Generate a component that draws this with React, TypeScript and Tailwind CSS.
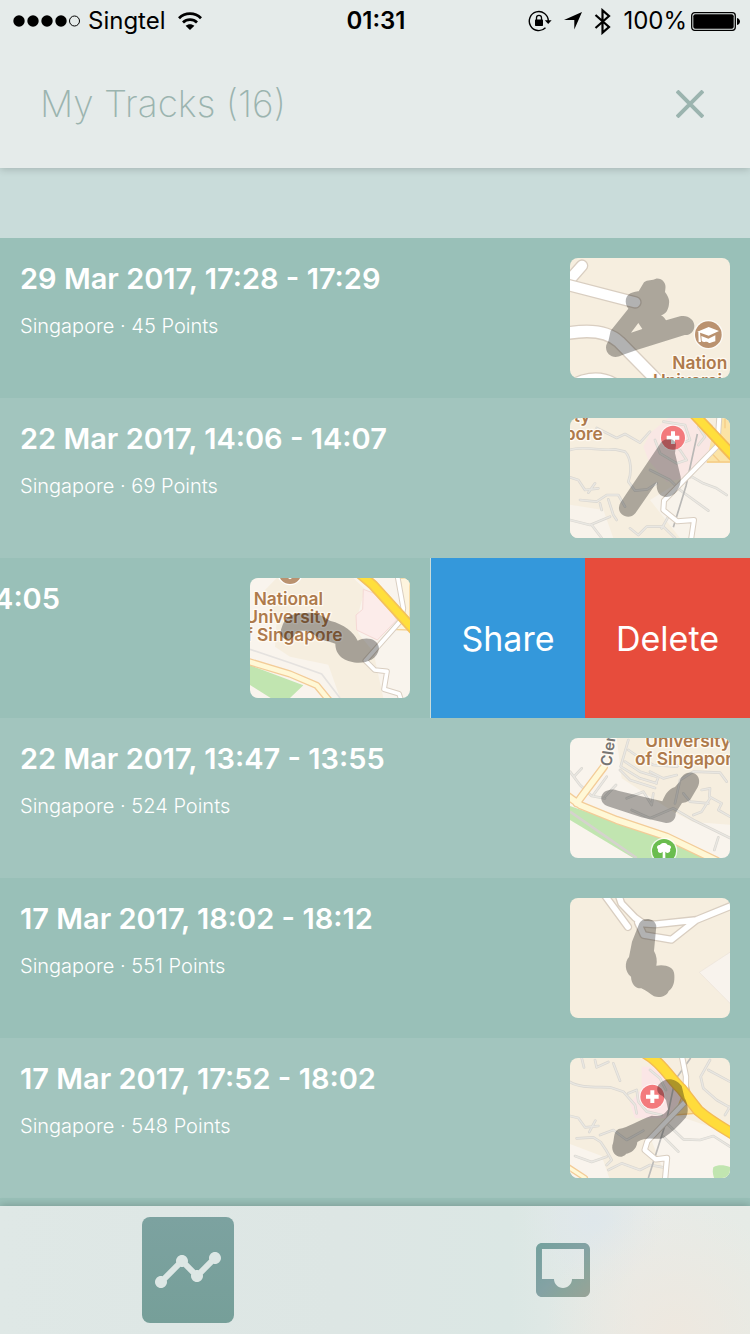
import type { ReactNode } from "react";

type RoadProps = { d: string; width: number; casing?: string; fill?: string; edge?: number };

function Road({ d, width, casing = "#d9cec1", fill = "#ffffff", edge = 4 }: RoadProps) {
  return (
    <g fill="none" strokeLinecap="round" strokeLinejoin="round">
      <path d={d} stroke={casing} strokeWidth={width + edge * 2} />
      <path d={d} stroke={fill} strokeWidth={width} />
    </g>
  );
}

function Lane({ d, width = 4 }: { d: string; width?: number }) {
  return (
    <g fill="none" strokeLinecap="round" strokeLinejoin="round">
      <path d={d} stroke="#dad7d1" strokeWidth={width + 4} />
      <path d={d} stroke="#e9e7e2" strokeWidth={width} />
    </g>
  );
}

type LabelProps = { x: number; y: number; children: string; size?: number; color?: string; transform?: string };

function Label({ x, y, children, size = 52, color = "#ae7a4c", transform }: LabelProps) {
  return (
    <text
      x={x}
      y={y}
      transform={transform}
      fontSize={size}
      fontWeight={600}
      fill={color}
      stroke="#fffaf2"
      strokeWidth={8}
      strokeLinejoin="round"
      paintOrder="stroke"
    >
      {children}
    </text>
  );
}

function Hospital({ x, y }: { x: number; y: number }) {
  return (
    <g>
      <circle cx={x} cy={y} r={39} fill="#fff" fillOpacity={0.7} />
      <circle cx={x} cy={y} r={36} fill="#f37a7d" />
      <path d={`M${x - 19} ${y}H${x + 19}M${x} ${y - 19}V${y + 19}`} stroke="#fff" strokeWidth={12} />
    </g>
  );
}

function MapThumb({ label, base = "#f6eedf", children }: { label: string; base?: string; children: ReactNode }) {
  return (
    <svg
      role="img"
      aria-label={label}
      viewBox="30 24 480 360"
      className="h-[120px] w-40 shrink-0 rounded-lg font-['Inter','Liberation_Sans',sans-serif]"
    >
      <rect x={30} y={24} width={480} height={360} fill={base} />
      {children}
    </svg>
  );
}

function CampusMap() {
  return (
    <MapThumb label="Map">
      <Road d="M20 100L66 47" width={30} />
      <Road d="M20 104L226 157" width={30} />
      <Road d="M10 252C80 238 140 240 178 276L300 400" width={34} />
      <Road d="M20 425C55 385 120 375 165 405" width={34} />
      <path
        fillRule="evenodd"
        fill="#000"
        fillOpacity={0.3}
        d="M252 97C262 88 278 92 288 86C306 84 320 99 316 118L315 126C322 136 330 148 327 162C325 180 318 192 303 196C310 200 315 206 318 211L360 199C382 193 403 208 403 227C403 244 391 256 374 255L230 300L185 316C162 328 138 316 138 292C138 285 142 279 145 274L152 242L205 176C192 160 194 132 220 127C228 124 233 124 236 124ZM235 219L213 248L247 237Z"
      />
      <circle cx={445} cy={254} r={44} fill="#fff" fillOpacity={0.7} />
      <circle cx={445} cy={254} r={40} fill="#ba9270" />
      <path d="M412 245L446 231L477 243L446 257ZM424 258L445 266L466 256V274C456 275 450 282 446 278C440 272 432 280 425 272ZM415 247H420L423 276H416Z" fill="#fff" />
      <Label x={337} y={357}>Nation</Label>
      <Label x={279} y={412}>Universi</Label>
    </MapThumb>
  );
}

function HospitalRoadMap() {
  return (
    <MapThumb label="Map">
      <path d="M325 24H400L510 150L375 205L320 215L265 150L250 110L270 70Z" fill="#f9e7e4" />
      <path d="M270 270L375 205L440 155H510V384H360Z" fill="#f8f3eb" />
      <path d="M30 284L130 300L160 384H30Z" fill="#f8f3eb" />
      <path d="M455 80L485 24H510V158H440Z" fill="#fbe3a6" />
      <path d="M440 156H510M495 24V55M455 130L480 156M470 108L510 150" fill="none" stroke="#f5cc86" strokeWidth={4} />
      <Lane d="M30 120C70 105 120 125 165 118L195 125C215 145 215 190 205 215L225 242L262 238L290 220" />
      <Lane d="M110 54L170 84L195 72L240 98L270 65" />
      <Lane d="M30 202L55 210L75 240L115 235M85 248L105 220" />
      <Lane d="M60 270L110 275L140 255L175 255L195 290M145 268L160 315L170 330M120 280L125 300" />
      <Lane d="M30 330L90 345L150 320M95 345L125 384" />
      <Lane d="M285 90L300 130L350 160L380 150L360 120L330 100M270 180L330 210L360 240L445 302M365 210L395 200L430 220L470 235L500 255" />
      <Lane d="M310 35L375 45L390 90L350 105M415 50L435 80L415 105" />
      <Lane d="M210 355L235 375L260 350L310 350L345 384M305 355L325 320M425 24L455 48" />
      <path d="M412 72L378 228L340 352" fill="none" stroke="#b9b8b6" strokeWidth={5} />
      <Road d="M478 20L472 108L312 272L310 300L352 334L402 330L393 390" width={12} edge={3} />
      <Road d="M400 10L525 143" width={23} casing="#f4bc54" fill="#ffdf3c" edge={5} />
      <Label x={41} y={37}>ty</Label>
      <Label x={14} y={90}>pore</Label>
      <Hospital x={339} y={83} />
      <path
        d="M304 96C318 82 347 84 348 105L345 130L362 200C365 227 347 260 320 261C295 261 287 238 291 216L226 310C208 332 174 316 177 292C178 281 184 274 190 265Z"
        fillOpacity={0.3}
      />
    </MapThumb>
  );
}

function UniversityMap() {
  return (
    <MapThumb label="Map" base="#f9f4ed">
      <path d="M110 24H340L375 58L355 130L355 190L400 245L430 384H300L265 284L150 260L105 230L110 150L75 60Z" fill="#f6eedf" />
      <path d="M370 58L430 80L470 150L412 210L350 180L348 135L368 118Z" fill="#fcecea" stroke="#f5d9d5" strokeWidth={3} />
      <path d="M480 24H510V180L455 178L492 130Z" fill="#fdf4de" stroke="#f4d295" strokeWidth={4} />
      <path d="M30 286L190 346L150 384H92L30 345Z" fill="#c1e5b0" />
      <path d="M30 238L150 278L245 312L300 384" fill="none" stroke="#e5e2df" strokeWidth={5} />
      <Road d="M20 273L150 312L230 346L268 392" width={14} casing="#f3cc98" fill="#fff8d6" edge={4} />
      <Road d="M472 16L490 115L484 150L376 272L404 300L441 304L432 358L477 371L484 392" width={11} edge={3} />
      <Road d="M356 8L400 46L520 178" width={22} casing="#f3c25d" fill="#ffdf3c" edge={5} />
      <circle cx={150} cy={8} r={38} fill="#fff" />
      <circle cx={150} cy={8} r={34} fill="#ba9270" />
      <path d="M132 16L150 28L168 16V24H132Z" fill="#fff" />
      <Label x={41} y={105}>National</Label>
      <Label x={16} y={159}>University</Label>
      <Label x={18} y={213}>f Singapore</Label>
      <path
        d="M126 170C140 126 174 130 212 128C245 130 258 147 272 153C310 162 342 187 353 212C377 199 415 205 417 235C413 269 378 280 350 278C315 274 286 258 286 221C263 211 250 215 231 200C207 180 185 179 168 187C160 205 150 211 139 208C122 205 118 187 126 170Z"
        fillOpacity={0.32}
      />
    </MapThumb>
  );
}

function ParkMap() {
  return (
    <MapThumb label="Map" base="#f9f4ed">
      <path d="M170 24H510V284L400 276L340 245L185 145Z" fill="#f6eedf" />
      <path d="M30 228L150 270L310 318L430 384H220L30 270Z" fill="#c1e5b0" />
      <path d="M30 245L230 384" fill="none" stroke="#d5d2cd" strokeWidth={8} />
      <Lane d="M30 125L60 165L95 198L135 205M65 115L42 140M100 195L140 140M135 200L168 165" />
      <Lane d="M205 30L182 110L240 145L290 160M195 95L240 125L295 142L288 160M180 120L210 150L285 174" />
      <Lane d="M205 60L240 84L280 105L350 110L385 80M270 125L310 145L350 135M345 220L360 150L400 125L480 128L500 155" />
      <Lane d="M200 205L250 185L275 225L280 190M215 240L270 265L340 235L400 270L510 324M475 322L463 360" />
      <Lane d="M425 180L450 175L448 200L485 220L475 240L510 260M450 205L425 245L400 255M370 190L390 215L445 220" />
      <Road d="M132 110L66 198L50 220M20 196L62 226L170 270L320 320L470 392" width={17} casing="#f3cc98" fill="#fff8d6" edge={4} />
      <Label x={0} y={0} size={46} color="#777573" transform="translate(154 110) rotate(-82)">Clem</Label>
      <Label x={256} y={50}>University</Label>
      <Label x={225} y={105}>of Singapor</Label>
      <circle cx={312} cy={363} r={40} fill="#fff" fillOpacity={0.8} />
      <circle cx={312} cy={363} r={36} fill="#6abd4f" />
      <path d="M308 365C301 373 291 367 294 358C287 352 293 343 300 345C304 338 319 337 323 345C331 344 337 351 330 357C334 367 323 373 316 365V390H308Z" fill="#fff" />
      <path
        d="M148 180C157 177 166 180 174 182L307 214C314 198 322 178 345 171L358 156C364 134 381 125 398 128C420 135 421 156 413 172L394 204C389 214 376 218 366 219L347 249C349 265 337 280 318 279L244 262L148 230C114 222 118 184 148 180Z"
        fillOpacity={0.31}
      />
    </MapThumb>
  );
}

function JunctionMap() {
  return (
    <MapThumb label="Map">
      <path d="M418 247L520 180V350Z" fill="#f8f3ed" stroke="#ebe3da" strokeWidth={2} />
      <Road d="M176 16L184 40L225 83L250 101L285 103L409 90L520 45M409 90L334 149L251 135L234 98M130 10L204 111" width={17} edge={4} />
      <path
        d="M238 100C248 80 285 83 289 108L282 183C290 197 292 213 289 227C310 222 344 228 343 255C344 273 342 291 326 303C320 319 299 325 282 319C270 312 258 300 244 295C228 296 214 284 213 260C194 246 193 216 207 201L216 155Z"
        fillOpacity={0.3}
      />
    </MapThumb>
  );
}

function HighwayMap() {
  return (
    <MapThumb label="Map">
      <path d="M245 50H320L375 130L320 205H225L210 160L245 115Z" fill="#fbe6e6" />
      <path d="M270 260L345 195L510 250V384H320Z" fill="#f9f4ed" />
      <path d="M30 282L125 318L148 384H30Z" fill="#f9f4ed" />
      <path d="M382 95L405 190L345 195Z" fill="#fbdf9b" stroke="#f1c276" strokeWidth={4} />
      <path d="M460 352C475 343 495 345 515 353V390H465C458 375 457 362 460 352Z" fill="#c1e5b0" />
      <Lane d="M30 96C60 115 110 110 150 112L190 125L225 165L230 190M160 40L180 92M105 30L110 52L145 36M65 24L72 52" />
      <Lane d="M30 198L55 204L75 232L115 228M88 246L106 212M50 265L100 262L122 276L138 300L155 330L140 345" />
      <Lane d="M45 318L95 336L140 320M120 255L160 240L200 270L250 242M145 360L185 340L240 360L270 345L310 352" />
      <Lane d="M205 130L230 120L235 155L260 185L305 195M270 60L300 85L318 120M310 260L355 305M320 220L370 268L420 270L460 258L510 290" />
      <Lane d="M450 30L422 80L430 115L470 150L505 170M445 60L510 95M510 170L495 195" />
      <path d="M392 24L345 90L320 210L265 384" fill="none" stroke="#bcbbb9" strokeWidth={5} />
      <Road d="M364 10L378 80L376 155L262 274L254 300L287 328L321 324L315 390" width={13} edge={3} />
      <Road d="M245 4C300 30 330 85 365 118L415 182C445 208 480 230 530 258" width={27} casing="#f3bb55" fill="#ffdc3b" edge={4} />
      <Road d="M20 348L75 384" width={10} casing="#f3cc98" fill="#fff8d6" edge={4} />
      <Hospital x={277} y={140} />
      <path
        d="M295 105C315 80 346 83 365 108L374 145C383 158 388 188 377 203C358 225 334 248 310 264C287 272 261 257 232 276C230 300 210 310 199 311C181 332 153 315 157 286C164 273 158 244 176 237C205 232 236 211 275 197C295 200 311 198 324 178L318 150L307 137C290 132 289 116 295 105Z"
        fillOpacity={0.32}
      />
    </MapThumb>
  );
}

function TrackRow({ title, points, shade, map }: { title: string; points: number; shade: string; map: ReactNode }) {
  return (
    <li className={`flex h-40 shrink-0 items-start justify-between p-5 text-white ${shade}`}>
      <div>
        <h2 className="text-[29px] leading-[42px] font-semibold">{title}</h2>
        <p className="mt-3 text-xl leading-7 font-light">Singapore · {points} Points</p>
      </div>
      {map}
    </li>
  );
}

function SwipedRow() {
  return (
    <li className="flex h-40 shrink-0 bg-[#99c0b8] text-white">
      <div className="flex flex-1 items-start justify-between border-r border-[#c9dcda] py-5 pr-5">
        <h2 className="flex w-[60px] justify-end text-[29px] leading-[42px] font-semibold">4:05</h2>
        <UniversityMap />
      </div>
      <button type="button" className="w-[154px] bg-[#3498db] text-[34px]">Share</button>
      <button type="button" className="w-[165px] bg-[#e74c3c] text-[34px]">Delete</button>
    </li>
  );
}

function StatusBar() {
  return (
    <div className="grid h-[42px] grid-cols-[1fr_auto_1fr] items-center pr-2.5 pl-3 text-2xl text-black">
      <div className="flex items-center">
        <svg viewBox="0 0 68 12" className="h-3 w-[68px]" aria-hidden="true">
          <circle cx="7" cy="6" r="5.7" />
          <circle cx="21" cy="6" r="5.7" />
          <circle cx="35" cy="6" r="5.7" />
          <circle cx="49" cy="6" r="5.7" />
          <circle cx="62.5" cy="6" r="5" fill="none" stroke="#000" />
        </svg>
        <span className="ml-2">Singtel</span>
        <svg viewBox="0 0 24 18" className="ml-3 h-[18px] w-6" fill="none" stroke="#000" strokeWidth="2.8" aria-hidden="true">
          <path d="M1 6.2C7 .2 17 .2 23 6.2" />
          <path d="M5 10.4C9 6.6 15 6.6 19 10.4" />
          <path d="M12 18L7.6 13.8C10 11.6 14 11.6 16.4 13.8Z" fill="#000" stroke="none" />
        </svg>
      </div>
      <span className="font-semibold">01:31</span>
      <div className="flex items-center justify-end">
        <svg viewBox="0 0 24 22" className="h-[22px] w-6" aria-hidden="true">
          <path d="M20.3 11A9.5 9.5 0 1 0 17.5 17.8" fill="none" stroke="#000" strokeWidth="1.4" />
          <path d="M16.8 10.3H23.6L20.2 14Z" />
          <rect x="7" y="9.5" width="8" height="6.5" rx=".7" />
          <path d="M8.5 10V7.8a2.5 2.5 0 0 1 5 0V10" fill="none" stroke="#000" strokeWidth="1.3" />
        </svg>
        <svg viewBox="0 0 18 18" className="ml-3 h-[18px] w-[18px]" aria-hidden="true">
          <path d="M18 0L10.3 17.5V8H0Z" />
        </svg>
        <svg viewBox="0 0 17 27" className="ml-3 h-[27px] w-[17px]" fill="none" stroke="#000" strokeWidth="2.2" aria-hidden="true">
          <path d="M1.5 7L15 19L8.5 24.7V2.3L15 8L1.5 20" />
        </svg>
        <span className="ml-3">100%</span>
        <svg viewBox="0 0 49 19" className="ml-1 h-[19px] w-[49px]" aria-hidden="true">
          <rect x=".7" y=".7" width="43.6" height="17.6" rx="3" fill="none" stroke="#000" strokeWidth="1.3" />
          <rect x="2.3" y="2.3" width="40.4" height="14.4" rx="2" />
          <path d="M46 6C50 7 50 12 46 13Z" />
        </svg>
      </div>
    </div>
  );
}

export default function App() {
  return (
    <div className="flex h-screen flex-col overflow-hidden bg-[#c9dcda] font-['Inter','Liberation_Sans',sans-serif]">
      <header className="relative z-10 shrink-0 bg-[#e5ebea] shadow-[0_1px_8px_rgba(0,0,0,0.2)]">
        <StatusBar />
        <div className="flex h-[126px] items-center justify-between px-10 pb-0.5 text-[#9bb4af]">
          <h1 className="text-[37px] leading-[48px] font-extralight">My Tracks (16)</h1>
          <button type="button" aria-label="Close" className="p-1.5">
            <svg viewBox="0 0 28 28" className="h-7 w-7" stroke="currentColor" strokeWidth="4" aria-hidden="true">
              <path d="M1 1L27 27M27 1L1 27" />
            </svg>
          </button>
        </div>
      </header>

      <main className="min-h-0 flex-1 overflow-hidden pt-[70px]">
        <ul className="flex h-full flex-col">
          <TrackRow title="29 Mar 2017, 17:28 - 17:29" points={45} shade="bg-[#99c0b8]" map={<CampusMap />} />
          <TrackRow title="22 Mar 2017, 14:06 - 14:07" points={69} shade="bg-[#a2c5be]" map={<HospitalRoadMap />} />
          <SwipedRow />
          <TrackRow title="22 Mar 2017, 13:47 - 13:55" points={524} shade="bg-[#a2c5be]" map={<ParkMap />} />
          <TrackRow title="17 Mar 2017, 18:02 - 18:12" points={551} shade="bg-[#99c0b8]" map={<JunctionMap />} />
          <TrackRow title="17 Mar 2017, 17:52 - 18:02" points={548} shade="bg-[#a2c5be]" map={<HighwayMap />} />
          <li aria-hidden="true" className="flex-1 bg-[#99c0b8]" />
        </ul>
      </main>

      <nav className="relative z-10 grid h-32 shrink-0 grid-cols-2 place-items-center bg-[#dde7e5] bg-[radial-gradient(circle_at_90%_100%,#eee8df_0px,transparent_130px),radial-gradient(circle_at_79%_10%,#dfe7eb_0px,transparent_70px),linear-gradient(90deg,#dfe8e6_0%,#dde6e4_45%,#dbe7e4_68%,#e8ebe8_85%,#e6ebe6_100%)] shadow-[0_-1px_8px_rgba(0,0,0,0.2)]">
        <button type="button" aria-label="Tracks" className="flex h-[106px] w-[92px] items-center justify-center rounded-lg bg-linear-to-b from-[#7ca2a0] to-[#769f99] text-[#dde7e5]">
          <svg viewBox="0 0 24 24" className="h-[72px] w-[72px]" fill="currentColor" aria-hidden="true">
            <path d="M23 8c0 1.1-.9 2-2 2-.18 0-.35-.02-.51-.07l-3.56 3.55c.05.16.07.34.07.52 0 1.1-.9 2-2 2s-2-.9-2-2c0-.18.02-.36.07-.52l-2.55-2.55c-.16.05-.34.07-.52.07s-.36-.02-.52-.07l-4.55 4.56c.05.16.07.33.07.51 0 1.1-.9 2-2 2s-2-.9-2-2 .9-2 2-2c.18 0 .35.02.51.07l4.56-4.55C8.02 9.36 8 9.18 8 9c0-1.1.9-2 2-2s2 .9 2 2c0 .18-.02.36-.07.52l2.55 2.55c.16-.05.34-.07.52-.07s.36.02.52.07l3.55-3.56C19.02 8.35 19 8.18 19 8c0-1.1.9-2 2-2s2 .9 2 2z" />
          </svg>
        </button>
        <button type="button" aria-label="Inbox">
          <svg viewBox="0 0 24 24" className="h-[72px] w-[72px]" aria-hidden="true">
            <defs>
              <linearGradient id="inbox-tint" x1="0" y1="0" x2="1" y2="1">
                <stop offset="0" stopColor="#73a19d" />
                <stop offset="0.5" stopColor="#84a2a4" />
                <stop offset="0.7" stopColor="#8aa59c" />
                <stop offset="1" stopColor="#99a397" />
              </linearGradient>
            </defs>
            <path fill="url(#inbox-tint)" d="M19 3H4.99c-1.11 0-1.98.89-1.98 2L3 19c0 1.1.88 2 1.99 2H19c1.1 0 2-.9 2-2V5c0-1.11-.9-2-2-2zm0 12h-4c0 1.66-1.35 3-3 3s-3-1.34-3-3H4.99V5H19v10z" />
          </svg>
        </button>
      </nav>
    </div>
  );
}
